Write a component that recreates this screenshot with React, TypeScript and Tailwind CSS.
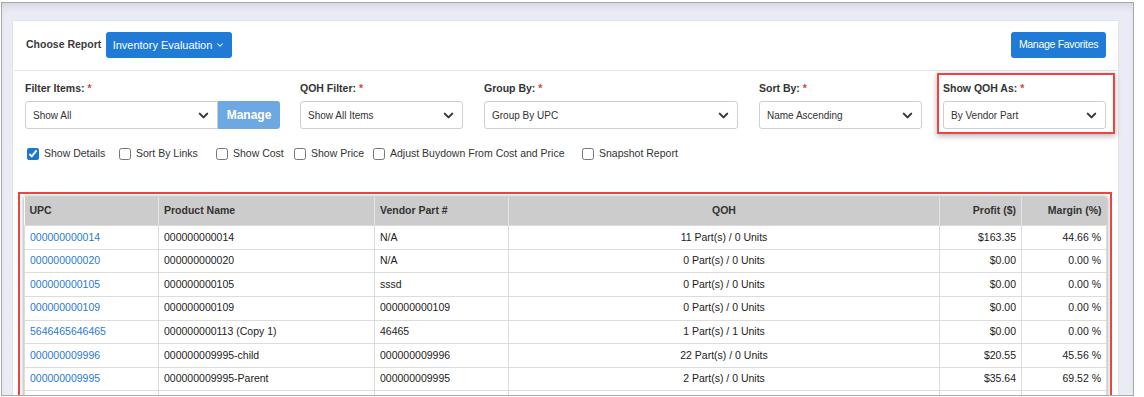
import { ChevronDown } from "lucide-react";

const rows = [
  { upc: "000000000014", name: "000000000014", vendor: "N/A", qoh: "11 Part(s) / 0 Units", profit: "$163.35", margin: "44.66 %" },
  { upc: "000000000020", name: "000000000020", vendor: "N/A", qoh: "0 Part(s) / 0 Units", profit: "$0.00", margin: "0.00 %" },
  { upc: "000000000105", name: "000000000105", vendor: "sssd", qoh: "0 Part(s) / 0 Units", profit: "$0.00", margin: "0.00 %" },
  { upc: "000000000109", name: "000000000109", vendor: "000000000109", qoh: "0 Part(s) / 0 Units", profit: "$0.00", margin: "0.00 %" },
  { upc: "5646465646465", name: "000000000113 (Copy 1)", vendor: "46465", qoh: "1 Part(s) / 1 Units", profit: "$0.00", margin: "0.00 %" },
  { upc: "000000009996", name: "000000009995-child", vendor: "000000009996", qoh: "22 Part(s) / 0 Units", profit: "$20.55", margin: "45.56 %" },
  { upc: "000000009995", name: "000000009995-Parent", vendor: "000000009995", qoh: "2 Part(s) / 0 Units", profit: "$35.64", margin: "69.52 %" },
  { upc: "", name: "", vendor: "", qoh: "", profit: "", margin: "" },
];

const checks = [
  { label: "Show Details", checked: true, w: "w-[92px]" },
  { label: "Sort By Links", checked: false, w: "w-[97px]" },
  { label: "Show Cost", checked: false, w: "w-[78px]" },
  { label: "Show Price", checked: false, w: "w-[79px]" },
  { label: "Adjust Buydown From Cost and Price", checked: false, w: "w-[209px]" },
  { label: "Snapshot Report", checked: false, w: "w-[120px]" },
];

function Label({ text }: { text: string }) {
  return (
    <div className="h-[20px] text-[10.5px] font-bold text-[#333] leading-[14px]">
      {text} <span className="text-[#e03c3c]">*</span>
    </div>
  );
}

function FakeSelect({ value, className }: { value: string; className?: string }) {
  return (
    <div
      className={`h-[28px] flex items-center justify-between pl-[7px] pr-[6px] border border-[#cfcfcf] rounded-[3px] bg-white text-[10px] text-[#333] ${className ?? ""}`}
    >
      <span>{value}</span>
      <ChevronDown size={15} strokeWidth={3.2} className="text-[#333]" />
    </div>
  );
}

export default function App() {
  return (
    <div className="w-[1144px] h-[397px] bg-white overflow-hidden pt-[2px] pl-[1px] font-['Liberation_Sans',Arial,sans-serif]">
      <div className="w-[1133px] h-[394px] border border-[#a8a8a8] bg-[#e9ecf5] overflow-hidden pt-[17px] pl-[10px] shadow-[inset_0_6px_8px_-4px_rgba(0,0,0,0.12)]">
        <div className="w-[1107px] h-[400px] bg-white border border-[#e2e4ea]">
          {/* header */}
          <div className="flex items-start justify-between pl-[12px] pr-[11px] pt-[11px] pb-[12px] border-b border-[#e3e3e3] mx-[1px]">
            <div className="flex items-start">
              <span className="w-[80px] text-[10.5px] font-bold text-[#3a3a3a] mt-[5px]">Choose Report</span>
              <button className="w-[126px] h-[26px] bg-[#1f7bd6] rounded-[3px] text-white text-[11px] flex items-center justify-center gap-[3px]">
                Inventory Evaluation
                <ChevronDown size={10} strokeWidth={2.5} />
              </button>
            </div>
            <button className="w-[95px] h-[26px] bg-[#1f7bd6] rounded-[3px] text-white text-[10.5px] tracking-[-0.3px]">
              Manage Favorites
            </button>
          </div>

          {/* filters */}
          <div className="pl-[12px] pt-[10px]">
            <div className="flex">
              <div className="w-[255px]">
                <Label text="Filter Items:" />
                <div className="flex">
                  <FakeSelect value="Show All" className="flex-1 rounded-r-none" />
                  <div className="w-[62px] h-[28px] bg-[#6ea8e3] rounded-r-[3px] text-white text-[12px] font-bold flex items-center justify-center">
                    Manage
                  </div>
                </div>
              </div>
              <div className="w-[163px] ml-[20px]">
                <Label text="QOH Filter:" />
                <FakeSelect value="Show All Items" />
              </div>
              <div className="w-[254px] ml-[21px]">
                <Label text="Group By:" />
                <FakeSelect value="Group By UPC" />
              </div>
              <div className="w-[163px] ml-[21px]">
                <Label text="Sort By:" />
                <FakeSelect value="Name Ascending" />
              </div>
              <div className="w-[163px] ml-[21px] relative">
                <Label text="Show QOH As:" />
                <FakeSelect value="By Vendor Part" />
                <div className="absolute left-[-6px] top-[-8px] w-[178px] h-[61px] border-2 border-[#ee4343] shadow-[0_2px_6px_rgba(0,0,0,0.3)] pointer-events-none" />
              </div>
            </div>

            <div className="flex items-center mt-[17px] pl-[2px] text-[10.5px] text-[#333]">
              {checks.map((c) => (
                <label key={c.label} className={`flex items-center ${c.w}`}>
                  <input
                    type="checkbox"
                    defaultChecked={c.checked}
                    className="w-[12px] h-[12px] m-0 accent-[#1976d2]"
                  />
                  <span className="ml-[5px]">{c.label}</span>
                </label>
              ))}
            </div>
          </div>

          {/* table */}
          <div className="ml-[5px] mt-[30px] w-[1094px] border-2 border-[#ee4343] pt-[3px] px-[4px] h-[220px] overflow-hidden">
            <table className="w-[1082px] table-fixed border-collapse text-[10.5px] text-[#222] shadow-[0_0_4px_rgba(0,0,0,0.45)]">
              <colgroup>
                <col className="w-[134px]" />
                <col className="w-[216px]" />
                <col className="w-[134px]" />
                <col className="w-[431px]" />
                <col className="w-[82px]" />
                <col className="w-[85px]" />
              </colgroup>
              <thead>
                <tr className="h-[29px] bg-[#cccccc] font-bold text-[#333]">
                  <th className="text-left pl-[5px] border-r border-[#e4e4e4] font-bold">UPC</th>
                  <th className="text-left pl-[5px] border-r border-[#e4e4e4] font-bold">Product Name</th>
                  <th className="text-left pl-[5px] border-r border-[#e4e4e4] font-bold">Vendor Part #</th>
                  <th className="text-center border-r border-[#e4e4e4] font-bold">QOH</th>
                  <th className="text-right pr-[5px] border-r border-[#e4e4e4] font-bold">Profit ($)</th>
                  <th className="text-right pr-[5px] font-bold">Margin (%)</th>
                </tr>
              </thead>
              <tbody>
                {rows.map((r, i) => (
                  <tr key={i} className="h-[23.6px] bg-white">
                    <td className="pl-[5px] p-0 border border-[#dcdcdc] text-[#2a7ad5]">{r.upc}</td>
                    <td className="pl-[5px] p-0 border border-[#dcdcdc]">{r.name}</td>
                    <td className="pl-[5px] p-0 border border-[#dcdcdc]">{r.vendor}</td>
                    <td className="text-center p-0 border border-[#dcdcdc]">{r.qoh}</td>
                    <td className="text-right pr-[5px] p-0 border border-[#dcdcdc]">{r.profit}</td>
                    <td className="text-right pr-[5px] p-0 border border-[#dcdcdc]">{r.margin}</td>
                  </tr>
                ))}
              </tbody>
            </table>
          </div>
        </div>
      </div>
    </div>
  );
}
